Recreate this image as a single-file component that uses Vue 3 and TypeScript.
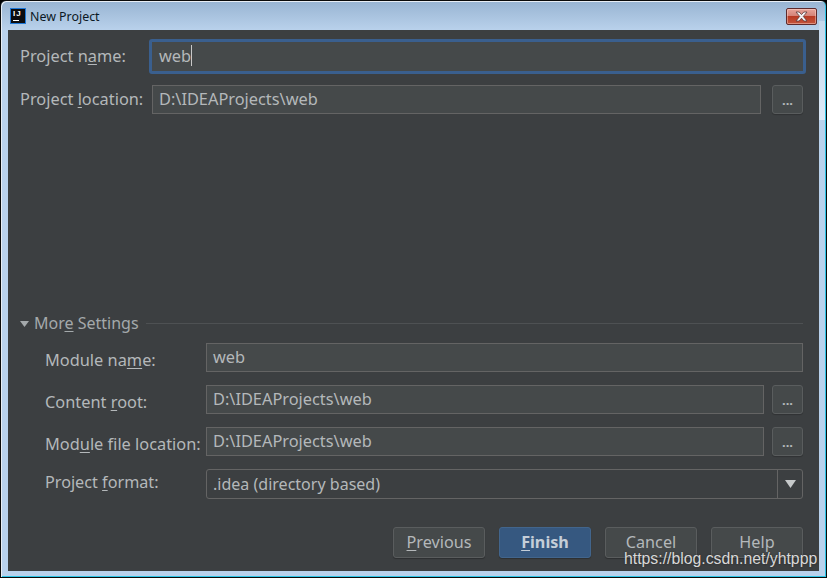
<script setup lang="ts">
interface Row { label: string; before: string; key: string; after: string; value: string; browse: boolean }
const rows: Row[] = [
  { label: 'Module name', before: 'Module na', key: 'm', after: 'e:', value: 'web', browse: false },
  { label: 'Content root', before: 'Content ', key: 'r', after: 'oot:', value: 'D:\\IDEAProjects\\web', browse: true },
  { label: 'Module file', before: 'Mod', key: 'u', after: 'le file location:', value: 'D:\\IDEAProjects\\web', browse: true },
]
</script>

<template>
  <div class="window">
    <header class="titlebar">
      <div class="appicon"><span>IJ</span><i></i></div>
      <span class="title">New Project</span>
      <button class="close" aria-label="Close">
        <svg width="13" height="11" viewBox="0 0 13 11">
          <path d="M1 1h3.2L6.5 3.6 8.8 1H12L8.3 5.4 12 10H8.8L6.5 7.2 4.2 10H1l3.7-4.6z" fill="#f4f4f6" stroke="#5a3a3a" stroke-width="0.8" />
        </svg>
      </button>
    </header>

    <main class="body">
      <div class="row name-row">
        <label class="top-label">Project n<u>a</u>me:</label>
        <div class="field focus">web<span class="caret"></span></div>
      </div>
      <div class="row location-row">
        <label class="top-label">Project <u>l</u>ocation:</label>
        <div class="field location">D:\IDEAProjects\web</div>
        <button class="browse wide">...</button>
      </div>

      <div class="spacer"></div>

      <div class="more">
        <svg class="tri" width="9" height="6" viewBox="0 0 9 6"><path d="M0 0h9L4.5 6z" fill="#a4a9ab" /></svg>
        <span class="more-text">Mor<u>e</u> Settings</span>
        <div class="sep"></div>
      </div>

      <div class="settings">
        <div v-for="r in rows" :key="r.label" class="row setting">
          <label class="sub-label">{{ r.before }}<u>{{ r.key }}</u>{{ r.after }}</label>
          <div class="field">{{ r.value }}</div>
          <button v-if="r.browse" class="browse">...</button>
        </div>
        <div class="row setting format">
          <label class="sub-label">Project <u>f</u>ormat:</label>
          <div class="combo">
            <span class="combo-text">.idea (directory based)</span>
            <span class="combo-arrow">
              <svg width="11" height="8" viewBox="0 0 11 8"><path d="M0 0h11L5.5 8z" fill="#c6c9ca" /></svg>
            </span>
          </div>
        </div>
      </div>

      <footer class="actions">
        <button class="btn"><u>P</u>revious</button>
        <button class="btn primary"><u>F</u>inish</button>
        <button class="btn">Cancel</button>
        <button class="btn">Help</button>
      </footer>
    </main>
    <div class="watermark">https://blog.csdn.net/yhtppp</div>
  </div>
</template>

<style>
html, body { margin: 0; background: #000; }
</style>

<style scoped>
.window {
  position: relative;
  box-sizing: border-box;
  width: 827px;
  height: 578px;
  overflow: hidden;
  display: flex;
  flex-direction: column;
  border: 1px solid #0a0a0a;
  border-radius: 6px 6px 0 0;
  background: linear-gradient(180deg, #98b4d2 0, #bad2ec 30px, #b8d1ec 100%);
  box-shadow: inset 1px 1px 0 #e8eef5, inset -1px 0 0 #2bc4e6, inset 0 -1px 0 #2bc4e6;
  font-family: "Noto Sans", "Open Sans", sans-serif;
  color: #b4b8ba;
}
/* window-glass highlight on the right edge of the frame */
.window::after {
  content: "";
  position: absolute;
  right: 1px;
  top: 20px;
  width: 6px;
  height: 99px;
  background: linear-gradient(180deg, #c4d8ec, #dce9f7);
}
.titlebar {
  height: 29px;
  flex: none;
  display: flex;
  align-items: center;
  padding: 0 9px 0 9px;
}
.appicon {
  position: relative;
  box-sizing: border-box;
  width: 16px;
  height: 16px;
  background: #0c0c10;
  border: 1px solid #1f78d8;
  color: #fff;
  font: bold 8px/8px "Liberation Sans", sans-serif;
  letter-spacing: 1px;
  padding: 1px 0 0 2px;
  margin-top: 1px;
}
.appicon span { display: block; }
.appicon i {
  position: absolute;
  left: 2px;
  bottom: 2px;
  width: 6px;
  height: 1px;
  background: #fff;
}
.title {
  margin-left: 4px;
  font: 12.4px "Noto Sans", sans-serif;
  color: #0c1824;
  margin-top: 1px;
}
.close {
  margin-left: auto;
  box-sizing: border-box;
  width: 31px;
  height: 17px;
  margin-top: 2px;
  padding: 0;
  display: flex;
  align-items: center;
  justify-content: center;
  border: 1px solid #5e2a2c;
  border-radius: 2px;
  background: linear-gradient(180deg, #e8a49a 0, #d48378 45%, #b83a24 50%, #c4553c 100%);
  box-shadow: inset 0 0 0 1px rgba(255, 220, 210, 0.45);
}
.body {
  flex: 1;
  margin: 0 7px 6px 7px;
  background: #3c3f41;
  display: flex;
  flex-direction: column;
  padding: 9px 16px 13px 12px;
  font-size: 16.35px;
  min-height: 0;
}
u { text-underline-offset: 2px; text-decoration-thickness: 1px; }
.row { display: flex; align-items: center; }
.top-label {
  width: 132px;
  flex: none;
  white-space: nowrap;
  margin-top: -2px;
}
.name-row { height: 35px; }
.location-row { height: 29px; margin-top: 11px; }
.field {
  flex: 1;
  box-sizing: border-box;
  height: 29px;
  background: #45494a;
  border: 1px solid #646464;
  padding: 0 6px 1px 6px;
  display: flex;
  align-items: center;
  color: #b4b8ba;
  white-space: nowrap;
}
.field.focus {
  height: 35px;
  margin-left: -3px;
  margin-right: -3px;
  border: 3px solid #3a5f8e;
  border-radius: 3px;
  padding: 0 6px 2px 7px;
}
.caret {
  display: inline-block;
  width: 1px;
  height: 21px;
  background: #c8c8c8;
}
.browse {
  box-sizing: border-box;
  flex: none;
  width: 31px;
  height: 29px;
  margin-left: 8px;
  background: #45494a;
  border: 1px solid #5a5d5e;
  border-radius: 3px;
  color: #b4b8ba;
  font: bold 13px "Noto Sans", sans-serif;
  padding: 0;
  box-shadow: 0 1px 1px rgba(0, 0, 0, 0.2);
}
.browse.wide { margin-left: 11px; }
.spacer { flex: 1; }
.more {
  display: flex;
  align-items: center;
  height: 20px;
}
.tri { flex: none; margin-right: 5px; }
.more-text { white-space: nowrap; color: #a4a9ab; margin-top: -2px; font-size: 16px; }
.sep { flex: 1; height: 1px; background: #4e5153; margin-left: 7px; margin-top: -1px; }
.settings { padding-left: 25px; margin-top: 9px; }
.setting { height: 29px; margin-bottom: 13px; }
.sub-label { width: 161px; flex: none; white-space: nowrap; padding-top: 4px; }
.format { height: 30px; margin-bottom: 0; }
.format .sub-label { padding-top: 0; margin-top: -4px; font-size: 16.2px; }
.combo {
  flex: 1;
  box-sizing: border-box;
  height: 30px;
  display: flex;
  align-items: stretch;
  border: 1px solid #646464;
  border-radius: 3px;
}
.combo-text { flex: 1; padding: 0 6px; display: flex; align-items: center; font-size: 16.05px; }
.combo-arrow {
  width: 24px;
  border-left: 1px solid #646464;
  display: flex;
  align-items: center;
  justify-content: center;
}
.actions {
  display: flex;
  justify-content: flex-end;
  gap: 14px;
  margin-top: 28px;
}
.btn {
  box-sizing: border-box;
  width: 92px;
  height: 31px;
  background: #45494a;
  border: 1px solid #5a5d5e;
  border-radius: 3px;
  color: #b4b8ba;
  font: 16.2px "Noto Sans", sans-serif;
  padding: 0 0 2px 0;
  box-shadow: 0 1px 1px rgba(0, 0, 0, 0.25);
}
.btn.primary {
  background: #365880;
  border-color: #42658c;
  color: #c5ced8;
  font-weight: 700;
}
.watermark {
  position: absolute;
  left: 623px;
  top: 549px;
  font: 15.8px "Liberation Sans", sans-serif;
  color: #d8d8d8;
  text-shadow: 0 0 2px #2a2a2a;
  white-space: nowrap;
}
</style>
